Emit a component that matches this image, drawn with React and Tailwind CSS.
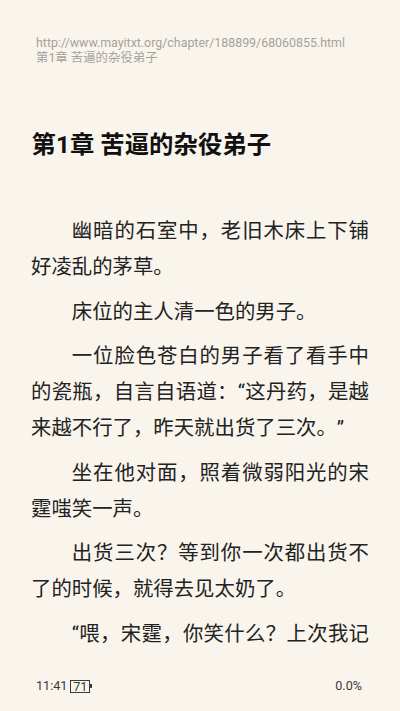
const paragraphs = [
  "幽暗的石室中，老旧木床上下铺好凌乱的茅草。",
  "床位的主人清一色的男子。",
  "一位脸色苍白的男子看了看手中的瓷瓶，自言自语道：“这丹药，是越来越不行了，昨天就出货了三次。”",
  "坐在他对面，照着微弱阳光的宋霆嗤笑一声。",
  "出货三次？等到你一次都出货不了的时候，就得去见太奶了。",
];

const font = "font-['Roboto','Noto_Sans_CJK_SC',sans-serif]";

export default function App() {
  return (
    <div className={`h-[711px] w-[400px] overflow-hidden bg-[#f9f5ed] flex flex-col ${font}`}>
      <div className="pt-[36px] pl-[36px] text-[12.4px] leading-[14.5px] text-[#a5a29c]">
        <div>http://www.mayitxt.org/chapter/188899/68060855.html</div>
        <div>第1章 苦逼的杂役弟子</div>
      </div>

      <h1 className="mt-[64px] pl-[31.5px] text-[24.4px] leading-[32px] font-bold text-[#111111]">第1章 苦逼的杂役弟子</h1>

      <div className="mt-[52px] px-[31px] h-[452px] overflow-hidden text-[20.4px] leading-[36px] text-[#222222] text-justify [text-spacing-trim:space-all]">
        {paragraphs.map((p) => (
          <p key={p} className="indent-[40.8px] mb-[8.5px]">{p}</p>
        ))}
        <p className="indent-[40.8px] [text-align-last:justify]">“喂，宋霆，你笑什么？上次我记</p>
      </div>

      <div className="flex items-center justify-between pl-[36px] pr-[38px] pt-[14px] text-[#3a3a3a] text-[12.6px] leading-[14px]">
        <div className="flex items-center gap-[3px]">
          <span>11:41</span>
          <div className="flex items-center">
            <div className="w-[20px] h-[13px] border border-[#3a3a3a] text-center text-[12.6px] leading-[11px]">71</div>
            <div className="w-[2px] h-[4px] bg-[#3a3a3a]"></div>
          </div>
        </div>
        <span>0.0%</span>
      </div>
    </div>
  );
}
